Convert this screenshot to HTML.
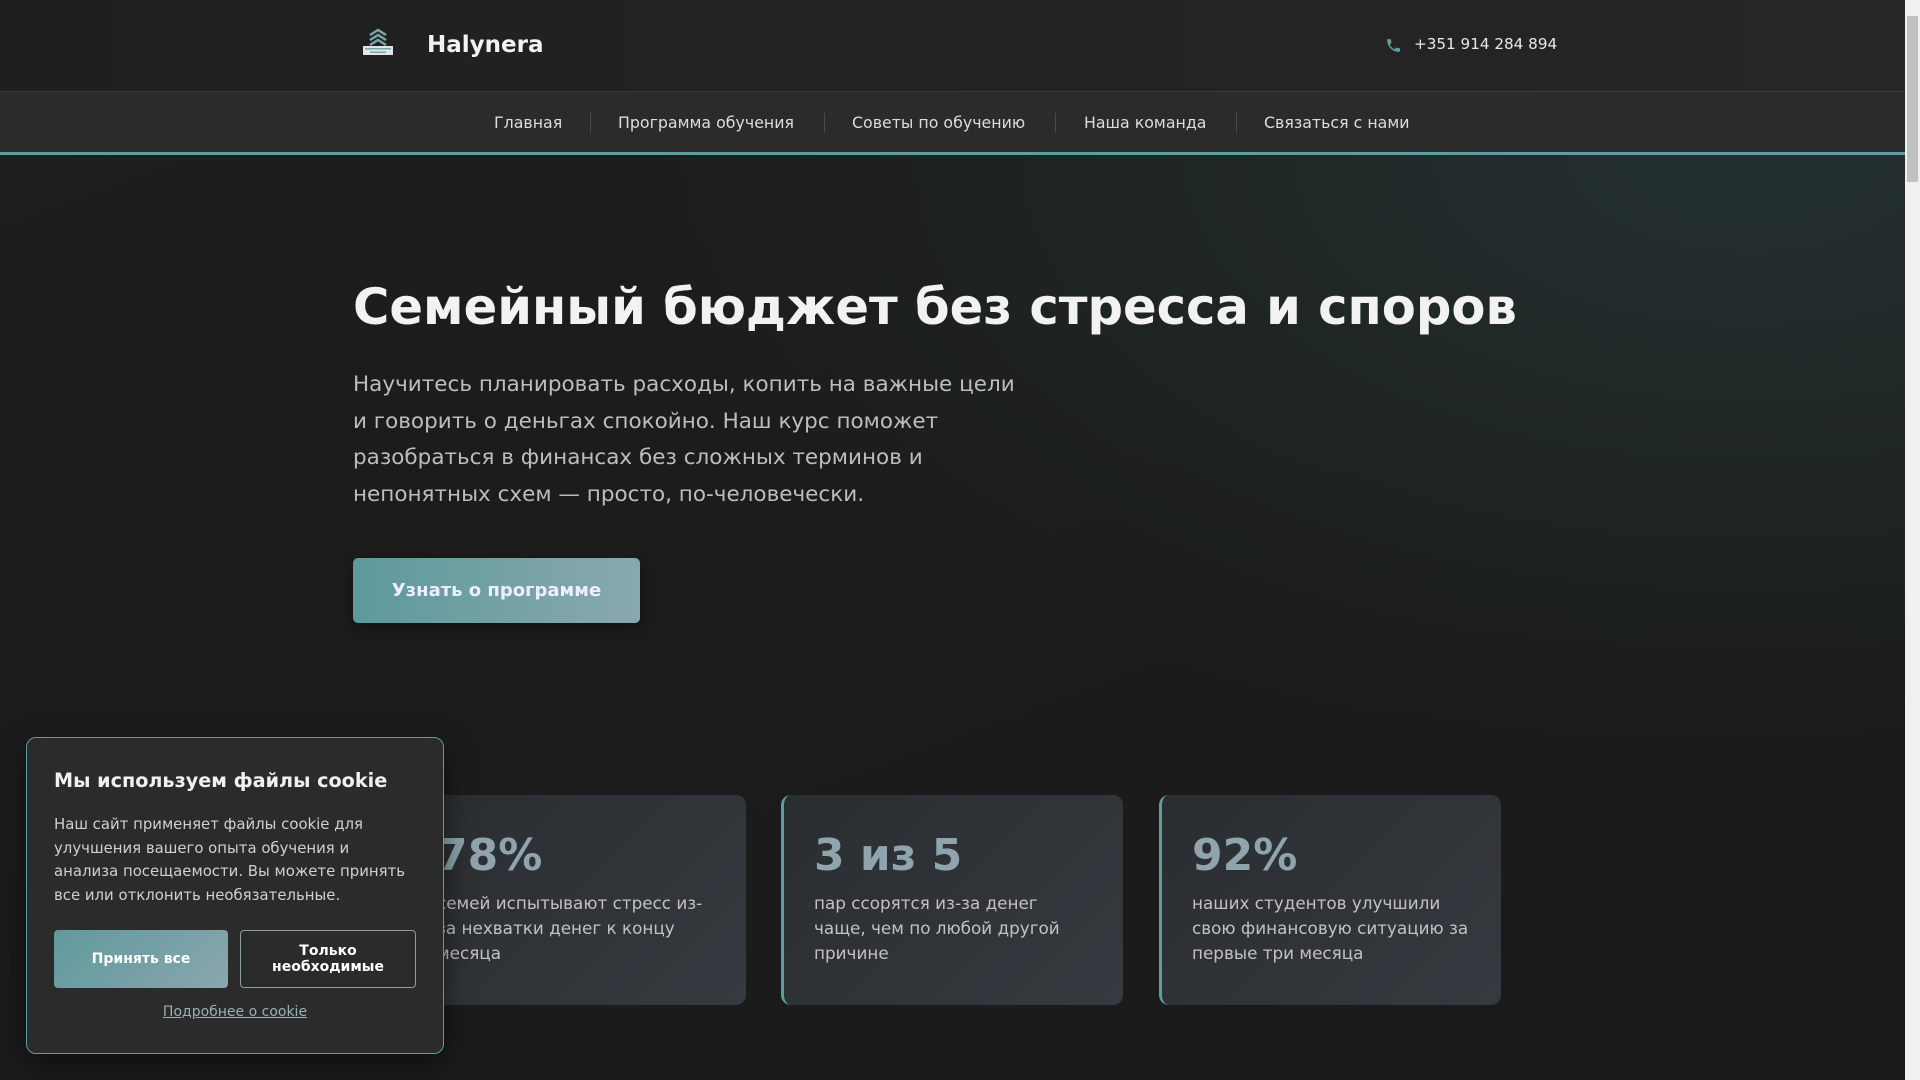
<!DOCTYPE html>
<html><head><meta charset="utf-8"><style>
*{margin:0;padding:0;box-sizing:border-box}
html,body{width:1920px;height:1080px;overflow:hidden;background:#1b1b1b;font-family:"DejaVu Sans","Liberation Sans",sans-serif;color:#ddd}
.page{position:absolute;left:0;top:0;width:1905px;height:1080px;background:linear-gradient(160deg,#1e1e1e 0%,#1c1c1c 40%,#1a1a1a 100%)}
.hero{position:absolute;left:0;top:155px;width:1905px;height:925px;background:radial-gradient(ellipse 1300px 700px at 1750px 0px,#243030 0%,#1f2525 45%,rgba(27,27,27,0) 85%)}
.header{position:absolute;left:0;top:0;width:1905px;height:92px;background:linear-gradient(90deg,#1f1f1f,#262626);border-bottom:1px solid #3a3a3a}
.nav{position:absolute;left:0;top:92px;width:1905px;height:63px;background:#2b2b2b;border-bottom:3px solid #5f9ea0}
.nav a{position:absolute;top:21px;font-size:15.8px;color:#ddd;text-decoration:none;white-space:nowrap}
.sep{position:absolute;top:21px;width:1px;height:20px;background:#4a4a4a}
.scroll{position:absolute;left:1905px;top:0;width:15px;height:1080px;background:#f0f0f0}
.thumb{position:absolute;left:1907px;top:16px;width:11px;height:166px;background:#c1c1c1}
h1{position:absolute;left:353px;top:278px;font-size:49.6px;font-weight:bold;color:#f2f2f2;white-space:nowrap}
.lead{position:absolute;left:353px;top:367px;width:680px;font-size:21.5px;line-height:36.7px;color:#bdbdbd}
.btn{position:absolute;left:353px;top:558px;width:287px;height:65px;border-radius:5px;background:linear-gradient(90deg,#5d9a9b,#89a8b0);color:#eef;font-weight:bold;font-size:18px;display:flex;align-items:center;justify-content:center;box-shadow:0 4px 14px rgba(0,0,0,.4)}
.card{position:absolute;top:795px;width:342px;height:210px;border-radius:10px;border-left:3px solid #5f9ea0;background:linear-gradient(135deg,#2a2d30,#353a40)}
.card .n{position:absolute;left:30px;top:35px;font-size:44px;font-weight:bold;color:#8fa4ad}
.card .t{position:absolute;left:30px;top:96px;width:277px;font-size:16.8px;line-height:25px;color:#c2c2c2}
.cookie{position:absolute;left:26px;top:737px;width:418px;height:317px;background:#2b2b2b;border:1px solid #5f9ea0;border-radius:10px;box-shadow:0 10px 30px rgba(0,0,0,.5)}
.cookie h3{position:absolute;left:27px;top:31px;font-size:19.2px;font-weight:bold;color:#f0f0f0;white-space:nowrap}
.cookie p{position:absolute;left:27px;top:75px;width:355px;font-size:14.9px;line-height:23.7px;color:#d0d0d0}
.b1{position:absolute;left:27px;top:192px;width:174px;height:58px;border-radius:4px;background:linear-gradient(135deg,#5f9a9c,#8aa6ae);color:#fff;font-weight:bold;font-size:14px;display:flex;align-items:center;justify-content:center}
.b2{position:absolute;left:213px;top:192px;width:176px;height:58px;border-radius:4px;border:1px solid #8a9ea3;color:#fff;font-weight:bold;font-size:14px;display:flex;align-items:center;justify-content:center;text-align:center;line-height:16px}
.lnk{position:absolute;left:0;width:416px;top:266px;text-align:center;font-size:14px;color:#9ab0b5;text-decoration:underline}
</style></head><body>
<div class="page">
<div class="hero"></div>
<div class="header">
 <svg style="position:absolute;left:362px;top:28px" width="32" height="28" viewBox="0 0 32 28">
  <path d="M8 7 L16 2 L24 7" stroke="#7aa3a8" stroke-width="2.5" fill="none"/>
  <path d="M8 12 L16 7 L24 12" stroke="#7aa3a8" stroke-width="2.5" fill="none"/>
  <path d="M8 17 L16 12 L24 17" stroke="#7aa3a8" stroke-width="2.5" fill="none"/>
  <rect x="1" y="18" width="30" height="9" fill="#dfe6e8"/>
  <rect x="3" y="20" width="26" height="1.5" fill="#7aa3a8"/><rect x="8" y="23.5" width="16" height="1.5" fill="#7aa3a8"/>
 </svg>
 <div style="position:absolute;left:427px;top:32px;font-size:23px;font-weight:bold;color:#f2f2f2">Halynera</div>
 <svg style="position:absolute;left:1385px;top:37px" width="17" height="17" viewBox="0 0 24 24"><path fill="#5f9ea0" d="M6.6 10.8c1.4 2.8 3.8 5.1 6.6 6.6l2.2-2.2c.3-.3.7-.4 1-.2 1.1.4 2.3.6 3.6.6.6 0 1 .4 1 1V20c0 .6-.4 1-1 1C10.6 21 3 13.4 3 4c0-.6.4-1 1-1h3.5c.6 0 1 .4 1 1 0 1.3.2 2.5.6 3.6.1.3 0 .7-.2 1z"/></svg>
 <div style="position:absolute;left:1414px;top:35px;font-size:15.2px;color:#e8e8e8">+351 914 284 894</div>
</div>
<div class="nav">
 <a style="left:494px">Главная</a><div class="sep" style="left:590px"></div>
 <a style="left:618px">Программа обучения</a><div class="sep" style="left:824px"></div>
 <a style="left:852px">Советы по обучению</a><div class="sep" style="left:1055px"></div>
 <a style="left:1084px">Наша команда</a><div class="sep" style="left:1236px"></div>
 <a style="left:1264px">Связаться с нами</a>
</div>
<h1>Семейный бюджет без стресса и споров</h1>
<div class="lead">Научитесь планировать расходы, копить на важные цели и говорить о деньгах спокойно. Наш курс поможет разобраться в финансах без сложных терминов и непонятных схем — просто, по-человечески.</div>
<div class="btn">Узнать о программе</div>
<div class="card" style="left:404px"><div class="n">78%</div><div class="t">семей испытывают стресс из-за нехватки денег к концу месяца</div></div>
<div class="card" style="left:781px"><div class="n">3 из 5</div><div class="t">пар ссорятся из-за денег чаще, чем по любой другой причине</div></div>
<div class="card" style="left:1159px"><div class="n">92%</div><div class="t">наших студентов улучшили свою финансовую ситуацию за первые три месяца</div></div>
<div class="cookie">
 <h3>Мы используем файлы cookie</h3>
 <p>Наш сайт применяет файлы cookie для улучшения вашего опыта обучения и анализа посещаемости. Вы можете принять все или отклонить необязательные.</p>
 <div class="b1">Принять все</div>
 <div class="b2">Только<br>необходимые</div>
 <div class="lnk">Подробнее о cookie</div>
</div>
</div>
<div class="scroll"></div><div class="thumb"></div>
</body></html>
